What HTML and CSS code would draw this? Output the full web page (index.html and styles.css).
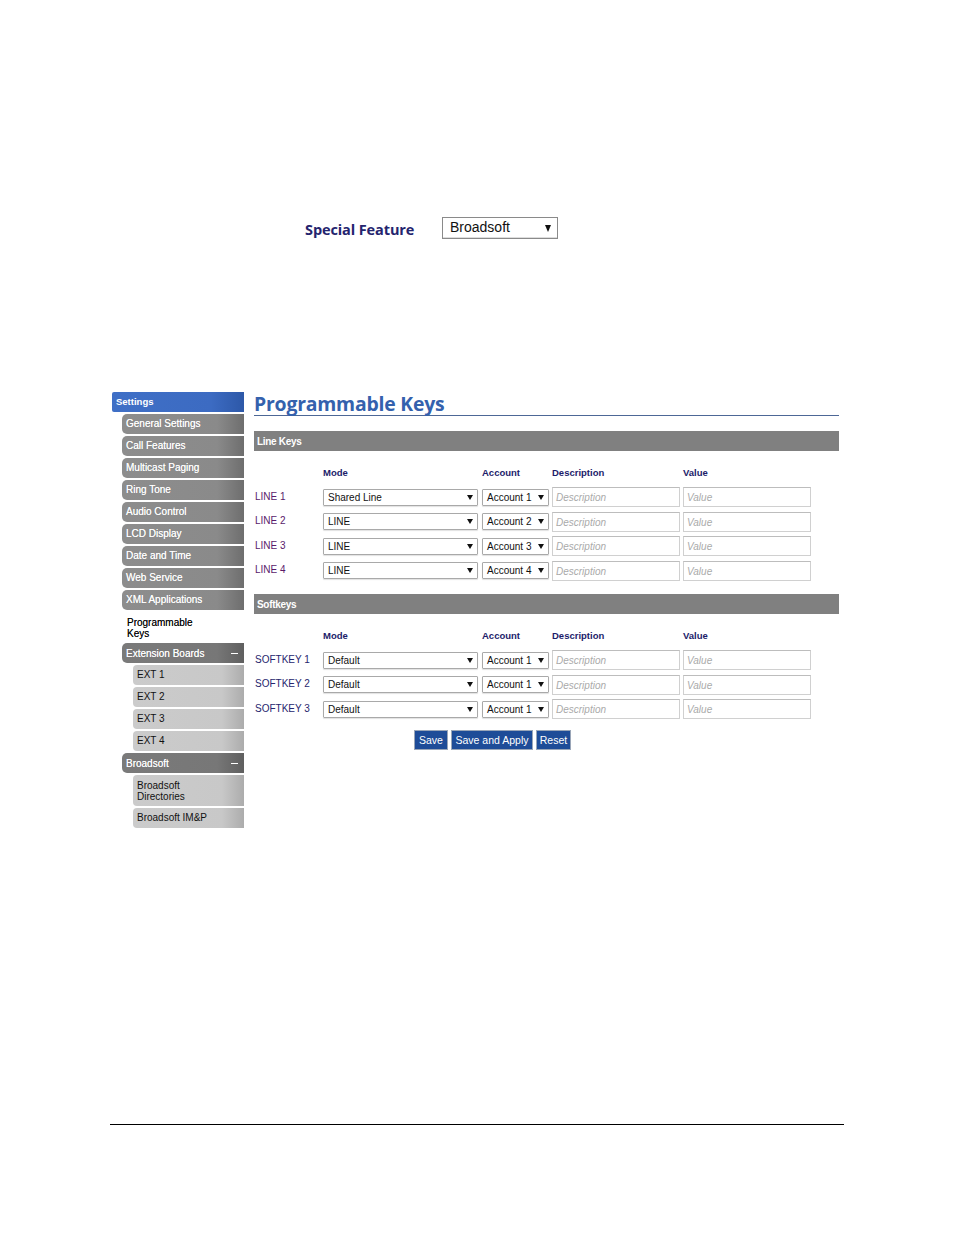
FILE: index.html
```html
<!DOCTYPE html>
<html>
<head>
<meta charset="utf-8">
<link rel="stylesheet" href="styles.css">
</head>
<body>
<div class="top">
  <span class="sf-label">Special Feature</span>
  <div class="sf-select"><span>Broadsoft</span><i class="arr big"></i></div>
</div>

<div class="app">
  <nav class="sidebar">
    <div class="nav-head">Settings</div>
    <div class="nav-item">General Settings</div>
    <div class="nav-item">Call Features</div>
    <div class="nav-item">Multicast Paging</div>
    <div class="nav-item">Ring Tone</div>
    <div class="nav-item">Audio Control</div>
    <div class="nav-item">LCD Display</div>
    <div class="nav-item">Date and Time</div>
    <div class="nav-item">Web Service</div>
    <div class="nav-item">XML Applications</div>
    <div class="nav-active">Programmable<br>Keys</div>
    <div class="nav-group"><span>Extension Boards</span><span class="minus"></span></div>
    <div class="nav-sub">EXT 1</div>
    <div class="nav-sub">EXT 2</div>
    <div class="nav-sub">EXT 3</div>
    <div class="nav-sub">EXT 4</div>
    <div class="nav-group"><span>Broadsoft</span><span class="minus"></span></div>
    <div class="nav-sub tall">Broadsoft<br>Directories</div>
    <div class="nav-sub">Broadsoft IM&amp;P</div>
  </nav>

  <main class="main">
    <h1 class="title">Programmable Keys</h1>

    <div class="bar">Line Keys</div>
    <div class="grid">
      <div class="hd-row"><span></span><span>Mode</span><span>Account</span><span>Description</span><span>Value</span></div>
      <div class="row">
        <span class="lbl line">LINE 1</span>
        <div class="sel mode"><span>Shared Line</span><i class="arr"></i></div>
        <div class="sel acct"><span>Account 1</span><i class="arr"></i></div>
        <div class="inp">Description</div>
        <div class="inp">Value</div>
      </div>
      <div class="row">
        <span class="lbl line">LINE 2</span>
        <div class="sel mode"><span>LINE</span><i class="arr"></i></div>
        <div class="sel acct"><span>Account 2</span><i class="arr"></i></div>
        <div class="inp">Description</div>
        <div class="inp">Value</div>
      </div>
      <div class="row">
        <span class="lbl line">LINE 3</span>
        <div class="sel mode"><span>LINE</span><i class="arr"></i></div>
        <div class="sel acct"><span>Account 3</span><i class="arr"></i></div>
        <div class="inp">Description</div>
        <div class="inp">Value</div>
      </div>
      <div class="row">
        <span class="lbl line">LINE 4</span>
        <div class="sel mode"><span>LINE</span><i class="arr"></i></div>
        <div class="sel acct"><span>Account 4</span><i class="arr"></i></div>
        <div class="inp">Description</div>
        <div class="inp">Value</div>
      </div>
    </div>

    <div class="bar bar2">Softkeys</div>
    <div class="grid">
      <div class="hd-row"><span></span><span>Mode</span><span>Account</span><span>Description</span><span>Value</span></div>
      <div class="row">
        <span class="lbl soft">SOFTKEY 1</span>
        <div class="sel mode"><span>Default</span><i class="arr"></i></div>
        <div class="sel acct"><span>Account 1</span><i class="arr"></i></div>
        <div class="inp">Description</div>
        <div class="inp">Value</div>
      </div>
      <div class="row">
        <span class="lbl soft">SOFTKEY 2</span>
        <div class="sel mode"><span>Default</span><i class="arr"></i></div>
        <div class="sel acct"><span>Account 1</span><i class="arr"></i></div>
        <div class="inp">Description</div>
        <div class="inp">Value</div>
      </div>
      <div class="row">
        <span class="lbl soft">SOFTKEY 3</span>
        <div class="sel mode"><span>Default</span><i class="arr"></i></div>
        <div class="sel acct"><span>Account 1</span><i class="arr"></i></div>
        <div class="inp">Description</div>
        <div class="inp">Value</div>
      </div>
    </div>

    <div class="buttons">
      <button class="btn b-save">Save</button>
      <button class="btn b-apply">Save and Apply</button>
      <button class="btn b-reset">Reset</button>
    </div>
  </main>
</div>

<div class="rule"></div>
</body>
</html>
```

FILE: styles.css
```css
* { box-sizing: border-box; }
html, body { margin: 0; padding: 0; background: #fff; }
body {
  font-family: "Liberation Sans", Arial, sans-serif;
  font-size: 10px;
  color: #000;
}

/* top special feature row */
.top {
  padding-top: 217px;
  padding-left: 305px;
  display: flex;
  align-items: center;
  height: 239px;
}
.sf-label {
  font-family: "Open Sans", "Liberation Sans", sans-serif;
  font-weight: 700;
  font-size: 14.5px;
  color: #24246e;
  width: 137px;
  padding-top: 2px;
  letter-spacing: -0.1px;
}
.sf-select {
  width: 116px;
  height: 22px;
  border: 1px solid #8a8a8a;
  box-shadow: inset 0 -1px 0 #ddd;
  display: flex;
  align-items: center;
  justify-content: space-between;
  padding: 0 6px 2px 7px;
  font-size: 14px;
  color: #111;
}

.arr {
  display: inline-block;
  width: 0; height: 0;
  border-left: 3px solid transparent;
  border-right: 3px solid transparent;
  border-top: 5px solid #111;
}
.arr.big {
  border-left-width: 3.5px;
  border-right-width: 3.5px;
  border-top-width: 7px;
  margin-top: 2px;
}

/* app */
.app {
  margin-top: 153px;
  display: flex;
  padding-left: 112px;
  gap: 10px;
}
.sidebar {
  width: 132px;
  flex: none;
  display: flex;
  flex-direction: column;
}
.nav-head {
  height: 20px;
  background: linear-gradient(to right, #3f6fc6 0%, #3c6bc2 75%, #2d58a8 100%);
  color: #fff;
  font-weight: 700;
  font-size: 9.5px;
  line-height: 19px;
  padding-left: 4px;
  border-radius: 2px 0 0 2px;
}
.nav-item, .nav-group {
  margin-left: 10px;
  margin-top: 2px;
  height: 20px;
  line-height: 19px;
  padding-left: 4px;
  color: #fff;
  font-size: 10px;
  border-radius: 5px 0 0 5px;
  background: linear-gradient(to right, #8d8d8d 0%, #8a8a8a 78%, #6e6e6e 100%);
  text-shadow: 0 0 0.6px rgba(255,255,255,0.8);
  white-space: nowrap;
}
.nav-group {
  background: linear-gradient(to right, #7a7a7a 0%, #777 78%, #5f5f5f 100%);
  display: flex;
  justify-content: space-between;
  align-items: center;
  padding-right: 6px;
}
.minus {
  display: block;
  width: 7px;
  height: 1px;
  background: #fff;
}
.nav-active {
  margin-left: 10px;
  margin-top: 3px;
  height: 28px;
  padding: 4px 0 0 5px;
  line-height: 11px;
  font-size: 10px;
  color: #000;
  text-shadow: 0 0 0.4px rgba(0,0,0,0.6);
}
.nav-sub {
  margin-left: 21px;
  margin-top: 2px;
  height: 20px;
  line-height: 20px;
  padding-left: 4px;
  color: #111;
  font-size: 10px;
  border-radius: 4px 0 0 4px;
  background: linear-gradient(to right, #cbcbcb 0%, #c8c8c8 80%, #acacac 100%);
}
.nav-sub.tall {
  height: 31px;
  line-height: 11px;
  padding-top: 5px;
}

/* main */
.main {
  width: 585px;
  flex: none;
}
.title {
  margin: 0;
  height: 24px;
  font-family: "Open Sans", "Liberation Sans", sans-serif;
  font-weight: 700;
  font-size: 19.4px;
  line-height: 23px;
  color: #3461ad;
  border-bottom: 1px solid #4d6796;
  letter-spacing: -0.2px;
}
.bar {
  margin-top: 15px;
  height: 20px;
  background: #808080;
  color: #fff;
  font-weight: 700;
  font-size: 10px;
  line-height: 21px;
  padding-left: 3px;
  letter-spacing: -0.3px;
}
.bar2 { margin-top: 11px; }

.grid {
  display: flex;
  flex-direction: column;
}
.hd-row, .row {
  display: grid;
  grid-template-columns: 69px 159px 70px 131px 128px;
  align-items: center;
}
.hd-row {
  margin-top: 11px;
  height: 20px;
  font-weight: 700;
  font-size: 9.5px;
  color: #1c1c6a;
  margin-bottom: 3px;
}
.row {
  height: 24.5px;
}
.lbl {
  font-size: 10px;
  padding-left: 1px;
  margin-top: -2px;
}
.lbl.line { color: #5a1a6a; }
.lbl.soft { color: #26266e; }
.sel {
  height: 17px;
  border: 1px solid #a9a9a9;
  border-radius: 1px;
  box-shadow: 0 1px 1px rgba(0,0,0,0.12);
  display: flex;
  align-items: center;
  justify-content: space-between;
  padding: 0 4px 0 4px;
  font-size: 10px;
  color: #111;
}
.sel.mode { width: 155px; }
.sel.acct { width: 67px; }
.inp {
  width: 128px;
  height: 20px;
  border: 1px solid #d0d0d0;
  border-top-color: #bdbdbd;
  font-style: italic;
  color: #aaa;
  font-size: 10px;
  line-height: 19px;
  padding-left: 3px;
}

.buttons {
  margin-top: 8px;
  padding-left: 160px;
  display: flex;
  gap: 3px;
}
.btn {
  font-family: "Liberation Sans", Arial, sans-serif;
  height: 20px;
  padding: 0;
  margin: 0;
  background: #1e4c98;
  color: #fff;
  font-size: 10.5px;
  border: 1px solid #9aa6b8;
  border-radius: 0;
}
.b-save { width: 34px; }
.b-apply { width: 82px; }
.b-reset { width: 35px; }

.rule {
  margin-top: 296px;
  margin-left: 110px;
  width: 734px;
  height: 0;
  border-top: 1px solid #000;
}
```
